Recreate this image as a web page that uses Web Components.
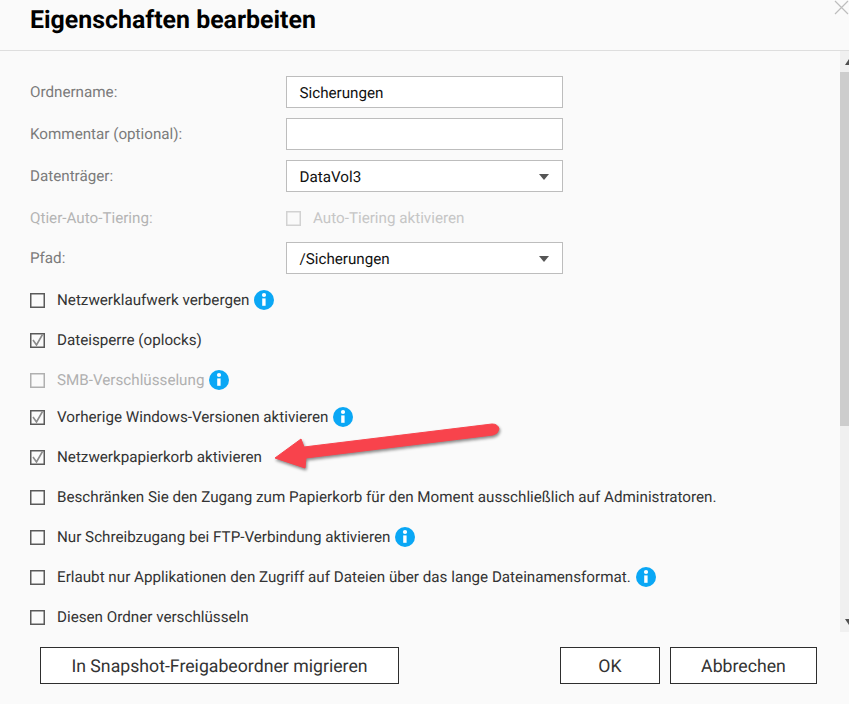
<!DOCTYPE html>
<html lang="de">
<head>
<meta charset="utf-8">
<title>Eigenschaften bearbeiten</title>
<style>
  html, body { margin: 0; height: 100%; background: #fafafa; overflow: hidden; }
  body { font-family: Roboto, "Liberation Sans", sans-serif; text-rendering: geometricPrecision; }
</style>
</head>
<body>
<edit-dialog heading="Eigenschaften bearbeiten">
  <field-row label="Ordnername:"><text-box>Sicherungen</text-box></field-row>
  <field-row label="Kommentar (optional):"><text-box></text-box></field-row>
  <field-row label="Datenträger:"><text-box arrow>DataVol3</text-box></field-row>
  <field-row label="Qtier-Auto-Tiering:" disabled tall><check-row faint disabled>Auto-Tiering aktivieren</check-row></field-row>
  <field-row label="Pfad:" last><text-box arrow>/Sicherungen</text-box></field-row>
  <check-row>Netzwerklaufwerk verbergen<info-dot></info-dot></check-row>
  <check-row checked>Dateisperre (oplocks)</check-row>
  <check-row disabled short>SMB-Verschlüsselung<info-dot></info-dot></check-row>
  <check-row checked>Vorherige Windows-Versionen aktivieren<info-dot></info-dot></check-row>
  <check-row checked>Netzwerkpapierkorb aktivieren</check-row>
  <check-row>Beschränken Sie den Zugang zum Papierkorb für den Moment ausschließlich auf Administratoren.</check-row>
  <check-row>Nur Schreibzugang bei FTP-Verbindung aktivieren<info-dot></info-dot></check-row>
  <check-row>Erlaubt nur Applikationen den Zugriff auf Dateien über das lange Dateinamensformat.<info-dot></info-dot></check-row>
  <check-row>Diesen Ordner verschlüsseln</check-row>
  <action-button slot="left" wide>In Snapshot-Freigabeordner migrieren</action-button>
  <action-button slot="right" style="width:100px">OK</action-button>
  <action-button slot="right" style="width:147px">Abbrechen</action-button>
</edit-dialog>

<script>
class EditDialog extends HTMLElement {
  constructor() {
    super();
    this.shadowDOM = this.attachShadow({mode: 'open'});
  }

  connectedCallback() {
    this.shadowDOM.innerHTML = `
      <style>
        :host { display: flex; flex-direction: column; height: 704px; position: relative; color: #333; }
        header {
          height: 44px;
          padding: 6px 0 0 30px;
          border-bottom: 1px solid #dedede;
          flex: none;
        }
        h1 { margin: 0; font-size: 24.9px; line-height: 30px; font-weight: 700; color: #000; }
        .close { position: absolute; top: 0; right: 0; }
        .middle { display: flex; height: 581px; flex: none; }
        .form { flex: 1; padding: 25px 0 0 30px; overflow: hidden; }
        .rail { width: 9px; flex: none; background: #f0f0f0; display: flex; flex-direction: column; align-items: flex-start; }
        .cap { height: 21px; flex: none; display: flex; align-items: center; }
        .thumb { height: 354px; width: 100%; flex: none; background: #cdcdcd; }
        .cap.down { margin-top: auto; }
        footer { flex: 1; display: flex; justify-content: space-between; padding: 15px 32px 0 40px; }
        .group { display: flex; gap: 10px; align-items: flex-start; }
        svg.arrow { position: absolute; left: 265px; top: 415px; overflow: visible; filter: drop-shadow(1px 2px 1.5px rgba(0,0,0,.45)); }
      </style>
      <header><h1>${this.getAttribute('heading')}</h1></header>
      <svg class="close" width="15" height="15" viewBox="0 0 15 15"><path d="M1 1 14 14M14 1 1 14" stroke="#bdbdbd" stroke-width="1.2" fill="none"/></svg>
      <div class="middle">
        <div class="form"><slot></slot></div>
        <div class="rail">
          <div class="cap"><svg width="9" height="8" viewBox="0 0 9 8"><path d="M5 7 9 1V7z" fill="#505050"/></svg></div>
          <div class="thumb"></div>
          <div class="cap down"><svg width="9" height="8" viewBox="0 0 9 8"><path d="M5 1H9V7z" fill="#505050"/></svg></div>
        </div>
      </div>
      <footer>
        <div class="group"><slot name="left"></slot></div>
        <div class="group"><slot name="right"></slot></div>
      </footer>
      <svg class="arrow" width="240" height="60" viewBox="0 0 240 60">
        <path d="M10 43 36 24 39 32 227 9Q233 9 234 14 233 19 228 20L41 43 40 53z" fill="#f8434c" stroke="#f8434c" stroke-width="1" stroke-linejoin="round"/>
      </svg>
    `;
  }
}

class FieldRow extends HTMLElement {
  constructor() {
    super();
    this.shadowDOM = this.attachShadow({mode: 'open'});
  }

  connectedCallback() {
    const tall = this.hasAttribute('tall');
    const last = this.hasAttribute('last');
    this.shadowDOM.innerHTML = `
      <style>
        :host { display: flex; align-items: center; height: ${tall ? 50 : 32}px; margin-bottom: ${tall ? 0 : last ? 16 : 10}px; margin-top: ${tall ? -10 : 0}px; }
        .label { width: 256px; flex: none; font-size: 15.2px; color: ${this.hasAttribute('disabled') ? '#b4b4b4' : '#7b7b7b'}; padding-top: ${tall ? 2 : 0}px; }
      </style>
      <div class="label">${this.getAttribute('label')}</div>
      <slot></slot>
    `;
  }
}

class TextBox extends HTMLElement {
  constructor() {
    super();
    this.shadowDOM = this.attachShadow({mode: 'open'});
  }

  connectedCallback() {
    const caret = this.hasAttribute('arrow')
      ? '<svg width="10" height="6" viewBox="0 0 10 6"><path d="M0 0H10L5 6z" fill="#555"/></svg>'
      : '';
    this.shadowDOM.innerHTML = `
      <style>
        :host {
          display: flex; align-items: center; justify-content: space-between;
          width: 277px; height: 32px; box-sizing: border-box;
          padding: 1px 13px 0 12.5px;
          background: #fff; border: 1px solid #bdbdbd;
          font-size: 15.2px; color: #111;
        }
      </style>
      <span><slot></slot></span>${caret}
    `;
  }
}

class CheckRow extends HTMLElement {
  constructor() {
    super();
    this.shadowDOM = this.attachShadow({mode: 'open'});
  }

  connectedCallback() {
    const checked = this.hasAttribute('checked');
    const disabled = this.hasAttribute('disabled');
    const faint = this.hasAttribute('faint');
    const edge = faint ? '#d2d2d2' : disabled ? '#b0b0b0' : '#5a5a5a';
    const tick = checked ? '<path d="M3 7 6.5 12 12.5 1.5" fill="none" stroke="#8a8a8a" stroke-width="1.6"/>' : '';
    this.shadowDOM.innerHTML = `
      <style>
        :host {
          display: flex; align-items: center; gap: 12px;
          height: 20px;
          margin-bottom: ${faint ? 0 : this.hasAttribute('short') ? 17 : 20}px;
          padding-top: ${faint ? 2 : 0}px;
          font-size: 15.2px;
          color: ${faint ? '#c6c6c6' : disabled ? '#b0b0b0' : '#333'};
        }
        svg { flex: none; }
        .text { display: flex; align-items: center; gap: 5px; white-space: nowrap; }
      </style>
      <svg width="15" height="15" viewBox="0 0 15 15">
        <rect x=".75" y=".75" width="13.5" height="13.5" fill="${faint || disabled ? 'none' : '#fafafa'}" stroke="${edge}" stroke-width="1.5"/>
        ${tick}
      </svg>
      <div class="text"><slot></slot></div>
    `;
  }
}

class InfoDot extends HTMLElement {
  constructor() {
    super();
    this.shadowDOM = this.attachShadow({mode: 'open'});
  }

  connectedCallback() {
    this.shadowDOM.innerHTML = `
      <style>
        :host { display: inline-flex; width: 20px; height: 20px; }
      </style>
      <svg width="20" height="20" viewBox="0 0 20 20">
        <circle cx="10" cy="10" r="10" fill="#0aa7f5"/>
        <circle cx="10" cy="5" r="2.1" fill="#fff"/>
        <path d="M8.2 8.4H11.6V15.8H8.2z" fill="#fff"/>
      </svg>
    `;
  }
}

class ActionButton extends HTMLElement {
  constructor() {
    super();
    this.shadowDOM = this.attachShadow({mode: 'open'});
  }

  connectedCallback() {
    this.shadowDOM.innerHTML = `
      <style>
        :host {
          display: flex; align-items: center; justify-content: center;
          width: ${this.hasAttribute('wide') ? '359px' : 'auto'};
          height: 37px; box-sizing: border-box;
          padding-top: 2px;
          background: #fff; border: 1px solid #2e2e2e;
          font-size: 17.7px; color: #333;
        }
      </style>
      <slot></slot>
    `;
  }
}

customElements.define('edit-dialog', EditDialog);
customElements.define('field-row', FieldRow);
customElements.define('text-box', TextBox);
customElements.define('check-row', CheckRow);
customElements.define('info-dot', InfoDot);
customElements.define('action-button', ActionButton);
</script>
</body>
</html>
